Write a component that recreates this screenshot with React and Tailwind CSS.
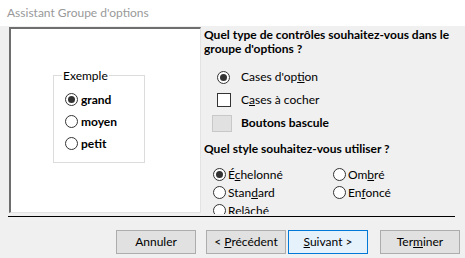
import React from "react";

const font = { fontFamily: 'Lato, "Segoe UI", "Noto Sans", Arial, sans-serif' };

function Radio({ checked }) {
  return (
    <span className="flex h-[13px] w-[13px] shrink-0 items-center justify-center rounded-full border border-[#333] bg-white">
      {checked && <span className="h-[7px] w-[7px] rounded-full bg-[#333]" />}
    </span>
  );
}

function Btn({ children, primary }) {
  return (
    <div
      className={
        "flex h-[24px] w-[80px] items-center justify-center border text-[12px] text-black " +
        (primary ? "border-[#0078d7] bg-[#e5f1fb]" : "border-[#adadad] bg-[#e1e1e1]")
      }
    >
      <span>{children}</span>
    </div>
  );
}

export default function App() {
  return (
    <div className="h-[258px] w-[465px] overflow-hidden bg-[#f0f0f0] text-black" style={font}>
      <div className="flex h-[26px] items-center bg-white pl-[7px] text-[12px] text-[#999]">
        Assistant Groupe d'options
      </div>

      <div className="flex h-[190px] pl-[9px] pt-[1px]">
        {/* preview panel */}
        <div className="h-[186px] w-[192px] shrink-0 border-l-2 border-t-2 border-b border-r border-l-[#6e6e6e] border-t-[#6e6e6e] border-b-[#e3e3e3] border-r-[#e3e3e3] bg-white pl-[42px] pt-[46px]">
          <div className="relative h-[88px] w-[92px] border border-[#dcdcdc] pl-[11px] pt-[17px]">
            <span className="absolute left-[8px] top-[-9px] bg-white px-[1px] text-[12px]">Exemple</span>
            <div className="flex flex-col gap-[9px] text-[12px] font-bold">
              <div className="flex h-[13px] items-center gap-[3px]">
                <Radio checked />
                <span>grand</span>
              </div>
              <div className="flex h-[13px] items-center gap-[3px]">
                <Radio />
                <span>moyen</span>
              </div>
              <div className="flex h-[13px] items-center gap-[3px]">
                <Radio />
                <span>petit</span>
              </div>
            </div>
          </div>
        </div>

        {/* options */}
        <div className="ml-[3px] h-[187px] flex-1 overflow-hidden text-[12px]">
          <div className="pt-[1px] font-bold leading-[14px]">
            Quel type de contrôles souhaitez-vous dans le
            <br />
            groupe d'options ?
          </div>
          <div className="mt-[14px] flex flex-col gap-[9px] pl-[8px]">
            <div className="flex h-[14px] items-center">
              <span className="flex w-[29px] pl-[5px]"><Radio checked /></span>
              <span>Cases d'op<u>t</u>ion</span>
            </div>
            <div className="flex h-[14px] items-center">
              <span className="flex w-[29px] pl-[5px]">
                <span className="h-[14px] w-[14px] border border-[#333] bg-white" />
              </span>
              <span>C<u>a</u>ses à cocher</span>
            </div>
            <div className="flex h-[14px] items-center font-bold">
              <span className="flex w-[29px]">
                <span className="h-[17px] w-[20px] border border-[#c8c8c8] bg-[#e1e1e1]" />
              </span>
              <span>Boutons bascule</span>
            </div>
          </div>
          <div className="mt-[12px] font-bold leading-[14px]">Quel style souhaitez-vous utiliser ?</div>
          <div className="mt-[12px] grid grid-cols-[120px_1fr] gap-y-[5px] pl-[9px]">
            <div className="flex h-[13px] items-center gap-[2px]"><Radio checked /><span>É<u>c</u>helonné</span></div>
            <div className="flex h-[13px] items-center gap-[2px]"><Radio /><span>Om<u>b</u>ré</span></div>
            <div className="flex h-[13px] items-center gap-[2px]"><Radio /><span>Stan<u>d</u>ard</span></div>
            <div className="flex h-[13px] items-center gap-[2px]"><Radio /><span>En<u>f</u>oncé</span></div>
            <div className="flex h-[13px] items-center gap-[2px]"><Radio /><span>Relâché</span></div>
          </div>
        </div>
      </div>

      <div className="ml-[8px] w-[447px] border-t border-black" />

      <div className="flex pl-[116px] pt-[13px]">
        <Btn>Annuler</Btn>
        <div className="ml-[10px]">
          <Btn>
            &lt;&nbsp;<u>P</u>récédent
          </Btn>
        </div>
        <div className="ml-[2px]">
          <Btn primary>
            <u>S</u>uivant &gt;
          </Btn>
        </div>
        <div className="ml-[12px]">
          <Btn>
            Ter<u>m</u>iner
          </Btn>
        </div>
      </div>
    </div>
  );
}
